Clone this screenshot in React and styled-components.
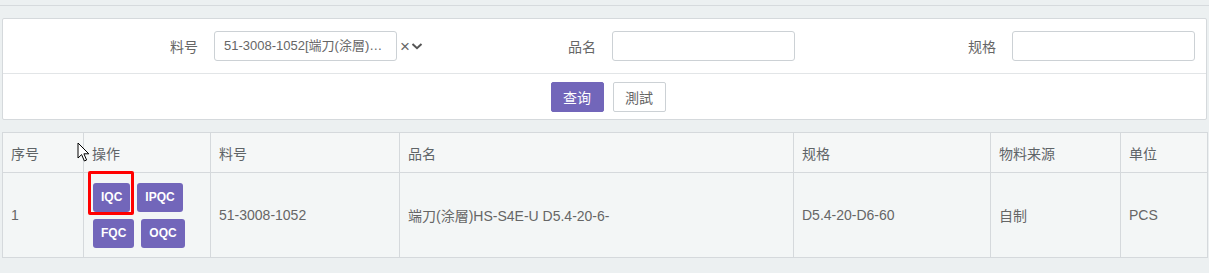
import React from 'react';
import styled, { createGlobalStyle } from 'styled-components';

const GlobalStyle = createGlobalStyle`
  html, body {
    margin: 0;
    padding: 0;
    background: #ecf0f1;
  }
  body {
    font-family: "Liberation Sans", "Noto Sans CJK SC", sans-serif;
    font-size: 14px;
    color: #666;
  }
`

const Page = styled.div`
  width: 1209px;
  height: 273px;
  overflow: hidden;
  background: #ecf0f1;
`

const TopStrip = styled.div`
  height: 5px;
  border-bottom: 1px solid #d6dadd;
  margin-bottom: 12px;
`

const Panel = styled.div`
  margin: 0 2px;
  background: #fff;
  border: 1px solid #d5d9dc;
  border-radius: 2px;
`

const FormRow = styled.div`
  display: grid;
  grid-template-columns: 398px 400px 400px;
  padding: 12px 0;
  border-bottom: 1px solid #e2e5e7;
`

const Field = styled.div`
  display: flex;
  align-items: center;
  gap: 16px;
`

const Label = styled.label`
  flex: none;
  width: 195px;
  text-align: right;
  color: #666;
`

const Input = styled.div`
  flex: none;
  box-sizing: border-box;
  width: 183px;
  height: 30px;
  border: 1px solid #ccd1d5;
  border-radius: 3px;
  padding: 0 13px 0 9px;
  line-height: 28px;
  font-size: 13px;
  color: #666;
  white-space: nowrap;
  overflow: hidden;
  text-overflow: ellipsis;
`

const SelectTools = styled.div`
  display: flex;
  align-items: center;
  margin-left: -13px;
  gap: 1px;
  color: #666;
  font-size: 17px;
  line-height: 1;
`

const ButtonRow = styled.div`
  display: flex;
  justify-content: center;
  gap: 9px;
  padding: 8px 0 7px 7px;
`

const Button = styled.button`
  width: 53px;
  height: 30px;
  padding: 0;
  border-radius: 2px;
  font-family: inherit;
  font-size: 14px;
  cursor: pointer;
  border: 1px solid ${p => (p.$primary ? '#7266ba' : '#ccd1d5')};
  background: ${p => (p.$primary ? '#7266ba' : '#fff')};
  color: ${p => (p.$primary ? '#fff' : '#666')};
`

const Table = styled.table`
  margin: 12px 2px 0;
  width: 1205px;
  table-layout: fixed;
  border-collapse: collapse;
  background: #f3f6f6;
  color: #666;
`

const Th = styled.th`
  height: 39px;
  padding: 0 8px;
  text-align: left;
  font-weight: normal;
  color: #5f6467;
  background: #f5f7f7;
  border: 1px solid #d5d9dc;
  position: relative;
`

const Td = styled.td`
  height: 84px;
  padding: 0 8px;
  border: 1px solid #d5d9dc;
  vertical-align: middle;
`

const ActionWrap = styled.div`
  display: flex;
  flex-wrap: wrap;
  column-gap: 7px;
  row-gap: 7px;
  padding-left: 1px;
`

const QcButton = styled.span`
  position: relative;
  display: inline-flex;
  align-items: center;
  justify-content: center;
  height: 29px;
  padding: 0 8px;
  border-radius: 3px;
  background: #7266ba;
  color: #fff;
  font-size: 12px;
  font-weight: bold;
`

const Highlight = styled.span`
  position: absolute;
  left: -5px;
  right: -4px;
  top: -12px;
  bottom: -3px;
  border: 3px solid #ff0000;
  border-radius: 2px;
`

const Cursor = styled.svg`
  position: absolute;
  left: -7px;
  top: 9px;
`

const columns = [
  { title: '序号', width: 81 },
  { title: '操作', width: 127 },
  { title: '料号', width: 189 },
  { title: '品名', width: 394 },
  { title: '规格', width: 197 },
  { title: '物料来源', width: 130 },
  { title: '单位', width: 87 }
];

const Chevron = () => (
  <svg width="12" height="10" viewBox="0 0 12 10">
    <path d="M1.5 3 L6 7.2 L10.5 3" fill="none" stroke="#555" strokeWidth="2" />
  </svg>
);

const App = () => (
  <Page>
    <GlobalStyle />
    <TopStrip />
    <Panel>
      <FormRow>
        <Field>
          <Label>料号</Label>
          <Input>51-3008-1052[端刀(涂層)HS-S4E-U D5.4-20-6-]</Input>
          <SelectTools>
            <span>×</span>
            <Chevron />
          </SelectTools>
        </Field>
        <Field>
          <Label>品名</Label>
          <Input />
        </Field>
        <Field>
          <Label>规格</Label>
          <Input />
        </Field>
      </FormRow>
      <ButtonRow>
        <Button $primary>查询</Button>
        <Button>測試</Button>
      </ButtonRow>
    </Panel>
    <Table>
      <colgroup>
        {columns.map(c => (
          <col key={c.title} style={{ width: c.width }} />
        ))}
      </colgroup>
      <thead>
        <tr>
          {columns.map(c => (
            <Th key={c.title}>
              {c.title === '操作' && (
                <Cursor width="14" height="21" viewBox="0 0 14 21">
                  <path d="M1 1 L1 16 L4.6 12.6 L7.4 19 L9.6 18 L6.9 11.8 L11.8 11.8 Z" fill="#fff" stroke="#000" strokeWidth="1" />
                </Cursor>
              )}
              {c.title}
            </Th>
          ))}
        </tr>
      </thead>
      <tbody>
        <tr>
          <Td>1</Td>
          <Td>
            <ActionWrap>
              <QcButton>
                IQC
                <Highlight />
              </QcButton>
              <QcButton>IPQC</QcButton>
              <QcButton>FQC</QcButton>
              <QcButton>OQC</QcButton>
            </ActionWrap>
          </Td>
          <Td>51-3008-1052</Td>
          <Td>端刀(涂層)HS-S4E-U D5.4-20-6-</Td>
          <Td>D5.4-20-D6-60</Td>
          <Td>自制</Td>
          <Td>PCS</Td>
        </tr>
      </tbody>
    </Table>
  </Page>
);

export default App;
